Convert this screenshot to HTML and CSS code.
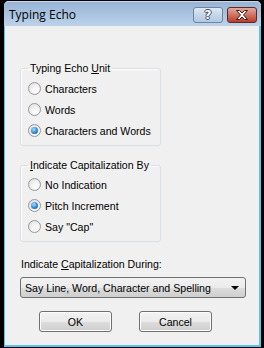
FILE: index.html
```html
<!DOCTYPE html>
<html lang="en">
<head>
  <meta charset="UTF-8">
  <title>Typing Echo</title>
  <link rel="stylesheet" href="styles.css">
</head>
<body>
  <div class="window">
    <div class="titlebar">
      <span class="title">Typing Echo</span>
      <span class="tb-btn help">?</span>
      <span class="tb-btn close">
        <svg width="14" height="10" viewBox="0 0 14 10"><path d="M1.5 0.5h3l2.5 2.5 2.5-2.5h3l-4 4.5 4 4.5h-3l-2.5-2.5-2.5 2.5h-3l4-4.5z" fill="#fff" stroke="#4a1a14" stroke-width="1"/></svg>
      </span>
    </div>
    <div class="client">
      <fieldset class="group first">
        <legend>Typing Echo <u>U</u>nit</legend>
        <div class="radio"><span class="dot"></span>Characters</div>
        <div class="radio"><span class="dot"></span>Words</div>
        <div class="radio"><span class="dot on"></span>Characters and Words</div>
      </fieldset>
      <fieldset class="group second">
        <legend><u>I</u>ndicate Capitalization By</legend>
        <div class="radio"><span class="dot"></span>No Indication</div>
        <div class="radio"><span class="dot on"></span>Pitch Increment</div>
        <div class="radio"><span class="dot"></span>Say "Cap"</div>
      </fieldset>
      <div class="during">Indicate <u>C</u>apitalization During:</div>
      <div class="combo">
        <span>Say Line, Word, Character and Spelling</span>
        <span class="arrow"></span>
      </div>
      <div class="buttons">
        <div class="btn">OK</div>
        <div class="btn">Cancel</div>
      </div>
    </div>
  </div>
</body>
</html>
```

FILE: styles.css
```css
body {
  margin: 0;
  background: #000;
  font-family: "Liberation Sans", Arial, sans-serif;
  font-size: 10.6px;
  color: #000;
}
.window {
  margin: 1px 0 0 4px;
  width: 257px;
  height: 346px;
  box-sizing: border-box;
  padding: 0 2px 2px 1px;
  background: #5cc2ee;
  border-radius: 5px 5px 0 0;
  display: flex;
  flex-direction: column;
}
.titlebar {
  height: 25px;
  margin: 0 -2px 0 -1px;
  padding: 0 4px 0 5px;
  display: flex;
  align-items: center;
  border-radius: 5px 5px 0 0;
  background: linear-gradient(#97b3d4, #aac4e1 55%, #bcd2ea);
  box-shadow: inset 0 1px 0 #c9d9ec;
}
.title {
  flex: 1;
  font-family: "Open Sans", "Noto Sans", sans-serif;
  font-size: 12px;
  padding-top: 2px;
}
.tb-btn {
  width: 30px;
  height: 16px;
  box-sizing: border-box;
  margin-top: 2px;
  border-radius: 3px;
  display: flex;
  align-items: center;
  justify-content: center;
}
.help {
  margin-right: 4px;
  border: 1px solid #6d84a2;
  background: linear-gradient(#dfe8f3, #c6d6ea 50%, #b2c8e3);
  color: #fff;
  font-family: "DejaVu Sans", sans-serif;
  font-weight: bold;
  font-size: 12px;
  text-shadow: 1px 0 #3d4c60, -1px 0 #3d4c60, 0 1px #3d4c60, 0 -1px #3d4c60;
}
.close {
  border: 1px solid #5b2a24;
  background: linear-gradient(#e6a89c, #d07362 50%, #bb3c2a);
}
.close svg {
  display: block;
}
.client {
  flex: 1;
  background: #f0f0f0;
  padding: 35px 0 0 0;
}
.group {
  margin: 0 0 0 15px;
  width: 141px;
  box-sizing: border-box;
  padding: 3px 0 4px 7px;
  border: 1px solid #d5dfe5;
  border-radius: 3px;
  box-shadow: inset 1px 1px 0 #fff;
}
.group.second {
  margin-top: 12px;
  padding-top: 2px;
}
legend {
  padding: 0 2px;
  line-height: 14px;
}
.radio {
  height: 21px;
  display: flex;
  align-items: center;
  gap: 4px;
}
.dot {
  width: 13px;
  height: 13px;
  box-sizing: border-box;
  border-radius: 50%;
  border: 1px solid #979797;
  background: radial-gradient(circle at 60% 65%, #fbfbfb 20%, #e2e2e2 80%);
  display: flex;
  align-items: center;
  justify-content: center;
}
.dot.on::after {
  content: "";
  width: 7px;
  height: 7px;
  border-radius: 50%;
  background: radial-gradient(circle at 40% 35%, #8fd3ff 10%, #2c86d1 55%, #0c4f95 100%);
}
.during {
  margin: 15px 0 0 16px;
  line-height: 14px;
}
.combo {
  margin: 6px 0 0 15px;
  width: 226px;
  height: 21px;
  box-sizing: border-box;
  padding: 0 6px 0 4px;
  border: 1px solid #707070;
  border-radius: 3px;
  background: linear-gradient(#f2f2f2, #ebebeb 50%, #dddddd 50%, #cfcfcf);
  display: flex;
  align-items: center;
  justify-content: space-between;
}
.arrow {
  width: 0;
  height: 0;
  border-left: 4px solid transparent;
  border-right: 4px solid transparent;
  border-top: 4px solid #000;
}
.buttons {
  display: flex;
  gap: 27px;
  margin: 13px 0 0 34px;
}
.btn {
  width: 73px;
  height: 21px;
  box-sizing: border-box;
  border: 1px solid #707070;
  border-radius: 3px;
  background: linear-gradient(#f2f2f2, #ebebeb 50%, #dddddd 50%, #cfcfcf);
  box-shadow: inset 0 0 0 1px #fcfcfc;
  display: flex;
  align-items: center;
  justify-content: center;
}
```
